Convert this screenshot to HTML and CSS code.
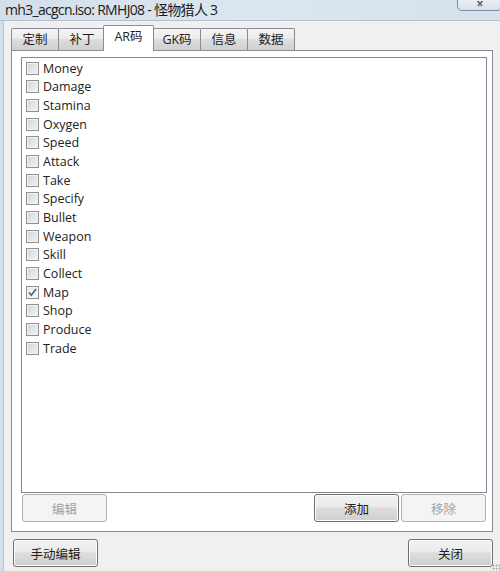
FILE: index.html
```html
<!DOCTYPE html>
<html lang="zh-CN">
<head>
    <meta charset="UTF-8">
    <title>mh3_acgcn.iso: RMHJ08 - 怪物猎人 3</title>
    <link rel="stylesheet" href="styles.css">
</head>
<body>
    <div class="window">
        <div class="titlebar">
            <span class="title">mh3_acgcn.iso: RMHJ08 - 怪物猎人 3</span>
            <span class="close-btn">
                <svg width="12" height="8" viewBox="0 0 12 8"><path d="M2 -2 L8 5 M10 -2 L4 5" stroke="#5a6673" stroke-width="1.6" fill="none"/></svg>
            </span>
        </div>

        <div class="client">
            <div class="tabs">
                <div class="tab">定制</div>
                <div class="tab">补丁</div>
                <div class="tab active">AR码</div>
                <div class="tab">GK码</div>
                <div class="tab">信息</div>
                <div class="tab">数据</div>
            </div>

            <div class="panel">
                <ul class="codelist">
                    <li><span class="check"></span>Money</li>
                    <li><span class="check"></span>Damage</li>
                    <li><span class="check"></span>Stamina</li>
                    <li><span class="check"></span>Oxygen</li>
                    <li><span class="check"></span>Speed</li>
                    <li><span class="check"></span>Attack</li>
                    <li><span class="check"></span>Take</li>
                    <li><span class="check"></span>Specify</li>
                    <li><span class="check"></span>Bullet</li>
                    <li><span class="check"></span>Weapon</li>
                    <li><span class="check"></span>Skill</li>
                    <li><span class="check"></span>Collect</li>
                    <li><span class="check checked"><svg width="11" height="11" viewBox="0 0 11 11"><path d="M2 5.5 L4.3 8.2 L9 2" fill="none" stroke="#4a5f86" stroke-width="1.6"/></svg></span>Map</li>
                    <li><span class="check"></span>Shop</li>
                    <li><span class="check"></span>Produce</li>
                    <li><span class="check"></span>Trade</li>
                </ul>

                <div class="panel-buttons">
                    <button class="btn" disabled>编辑</button>
                    <span class="spacer"></span>
                    <button class="btn">添加</button>
                    <button class="btn" disabled>移除</button>
                </div>
            </div>

            <div class="bottom-buttons">
                <button class="btn">手动编辑</button>
                <span class="spacer"></span>
                <button class="btn">关闭</button>
                <span class="grip"></span>
            </div>
        </div>
    </div>
</body>
</html>
```

FILE: styles.css
```css
body {
    margin: 0;
    padding: 0;
    background-color: #f0f0f0;
    font-family: "Open Sans", "Noto Sans CJK SC", sans-serif;
    color: #1e1e1e;
}

.window {
    width: 500px;
    height: 571px;
    display: flex;
    flex-direction: column;
    overflow: hidden;
}

.titlebar {
    height: 20px;
    display: flex;
    align-items: flex-start;
    background: linear-gradient(to right, #d3dfeb 0%, #dce6f0 50%, #d6e1ec 100%);
    border-bottom: 1px solid #b4c2d0;
}

.title {
    padding-left: 5px;
    font-size: 14px;
    letter-spacing: -0.7px;
    line-height: 19px;
    color: #1b1b1b;
}

.close-btn {
    margin-left: auto;
    margin-right: -2px;
    width: 45px;
    height: 11px;
    border: 1px solid #7b8a9c;
    border-top: none;
    border-radius: 0 0 5px 5px;
    background: linear-gradient(#e9eef4, #d8e1ea);
    display: flex;
    justify-content: center;
    align-items: flex-end;
    padding-bottom: 1px;
    box-sizing: border-box;
}

.client {
    flex: 1;
    display: flex;
    flex-direction: column;
    border-left: 3px solid #d3dfeb;
    box-shadow: inset 1px 0 0 #b9c4cf;
    padding: 0 7px 0 8px;
}

.tabs {
    display: flex;
    align-items: flex-end;
    height: 29px;
    position: relative;
    z-index: 1;
}

.tab {
    width: 46px;
    height: 21px;
    border: 1px solid #898c95;
    border-bottom: none;
    border-radius: 2px 2px 0 0;
    margin-right: -1px;
    background: linear-gradient(#f5f5f5, #ebebeb 45%, #dddddd 50%, #cfcfcf);
    font-size: 12.5px;
    line-height: 21px;
    text-align: center;
    color: #1e1e1e;
}

.tab.active {
    width: 49px;
    height: 25px;
    margin: 0 -1px -1px -2px;
    background: #fff;
    line-height: 22px;
    position: relative;
}

.panel {
    height: 474px;
    border: 1px solid #898c95;
    background: #fff;
    padding: 6px 5px 0 9px;
    display: flex;
    flex-direction: column;
}

.codelist {
    list-style: none;
    margin: 0;
    padding: 1px 0 0 4px;
    height: 433px;
    border: 1px solid #828790;
    font-size: 12.5px;
    color: #222;
}

.codelist li {
    height: 18.67px;
    display: flex;
    align-items: center;
    gap: 4px;
}

.check {
    width: 11px;
    height: 11px;
    border: 1px solid #8e8f8f;
    background: linear-gradient(135deg, #d2d4d8, #f4f4f4);
    box-shadow: inset 0 0 0 1px #f4f4f4;
    display: flex;
    align-items: center;
    justify-content: center;
}

.check.checked {
    background: linear-gradient(135deg, #e4e7ec, #fbfbfb);
}

.panel-buttons {
    display: flex;
    gap: 2px;
    margin-top: 1px;
    padding-left: 1px;
    padding-right: 1px;
}

.spacer {
    flex: 1;
}

.btn {
    width: 85px;
    height: 28px;
    padding: 0;
    font-family: "Noto Sans CJK SC", sans-serif;
    font-size: 12.5px;
    color: #1e1e1e;
    border: 1px solid #707070;
    border-radius: 3px;
    background: linear-gradient(#f2f2f2, #ebebeb 45%, #dddddd 50%, #cfcfcf);
    box-shadow: inset 0 0 0 1px #fcfcfc;
}

.btn:disabled {
    color: #a0a0a0;
    border-color: #adb2b5;
    background: #f4f4f4;
    box-shadow: none;
}

.bottom-buttons {
    display: flex;
    margin-top: 7px;
    padding-left: 2px;
    position: relative;
}

.grip {
    position: absolute;
    right: -7px;
    bottom: -5px;
    width: 8px;
    height: 8px;
    background: radial-gradient(circle, #a8a8a8 0.8px, transparent 1.2px) 0 0 / 3px 3px;
}
```
